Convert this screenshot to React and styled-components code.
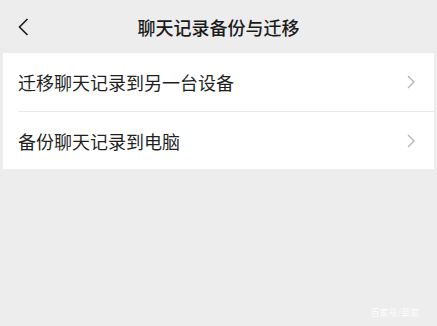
import React from 'react';
import styled, { createGlobalStyle } from 'styled-components';

const GlobalStyle = createGlobalStyle`
    html, body {
        margin: 0;
        padding: 0;
        background: #ededed;
        font-family: "Noto Sans CJK SC", "Noto Sans", sans-serif;
    }
`;

const Page = styled.div`
    position: relative;
    width: 437px;
    height: 326px;
    background: #ededed;
    overflow: hidden;
`;

const Header = styled.div`
    height: 53px;
    display: grid;
    grid-template-columns: 60px 1fr 60px;
    align-items: center;

    .back {
        padding-left: 18px;
        display: flex;
        align-items: center;
    }

    h1 {
        margin: 0;
        text-align: center;
        font-size: 18px;
        font-weight: 500;
        color: #1b1b1b;
    }
`;

const Card = styled.div`
    margin: 0 3px;
    background: #ffffff;
`;

const Row = styled.div`
    height: 58px;
    display: flex;
    align-items: center;
    justify-content: space-between;
    padding-right: 19px;
    padding-left: ${({ $divider }) => ($divider ? '0' : '15px')};
    margin-left: ${({ $divider }) => ($divider ? '15px' : '0')};
    border-top: ${({ $divider }) => ($divider ? '1px solid #e9e9e9' : 'none')};
    box-sizing: border-box;

    span {
        font-size: 18px;
        color: #1f1f1f;
    }
`;

const Watermark = styled.div`
    position: absolute;
    right: 18px;
    bottom: 7px;
    font-size: 9px;
    color: rgba(255, 255, 255, 0.9);
`;

function Chevron() {
    return (
        <svg width="8" height="14" viewBox="0 0 8 14">
            <path d="M1 1 L7 7 L1 13" fill="none" stroke="#b3b3b3" strokeWidth="1.3" />
        </svg>
    );
}

const items = ['迁移聊天记录到另一台设备', '备份聊天记录到电脑'];

export default function App() {
    return (
        <Page>
            <GlobalStyle />
            <Header>
                <div className="back">
                    <svg width="11" height="18" viewBox="0 0 11 18">
                        <path d="M9.5 1 L1.5 9 L9.5 17" fill="none" stroke="#1b1b1b" strokeWidth="1.6" />
                    </svg>
                </div>
                <h1>聊天记录备份与迁移</h1>
                <div />
            </Header>
            <Card>
                {items.map((label, i) => (
                    <Row key={label} $divider={i > 0}>
                        <span>{label}</span>
                        <Chevron />
                    </Row>
                ))}
            </Card>
            <Watermark>百家号/草家</Watermark>
        </Page>
    );
}
